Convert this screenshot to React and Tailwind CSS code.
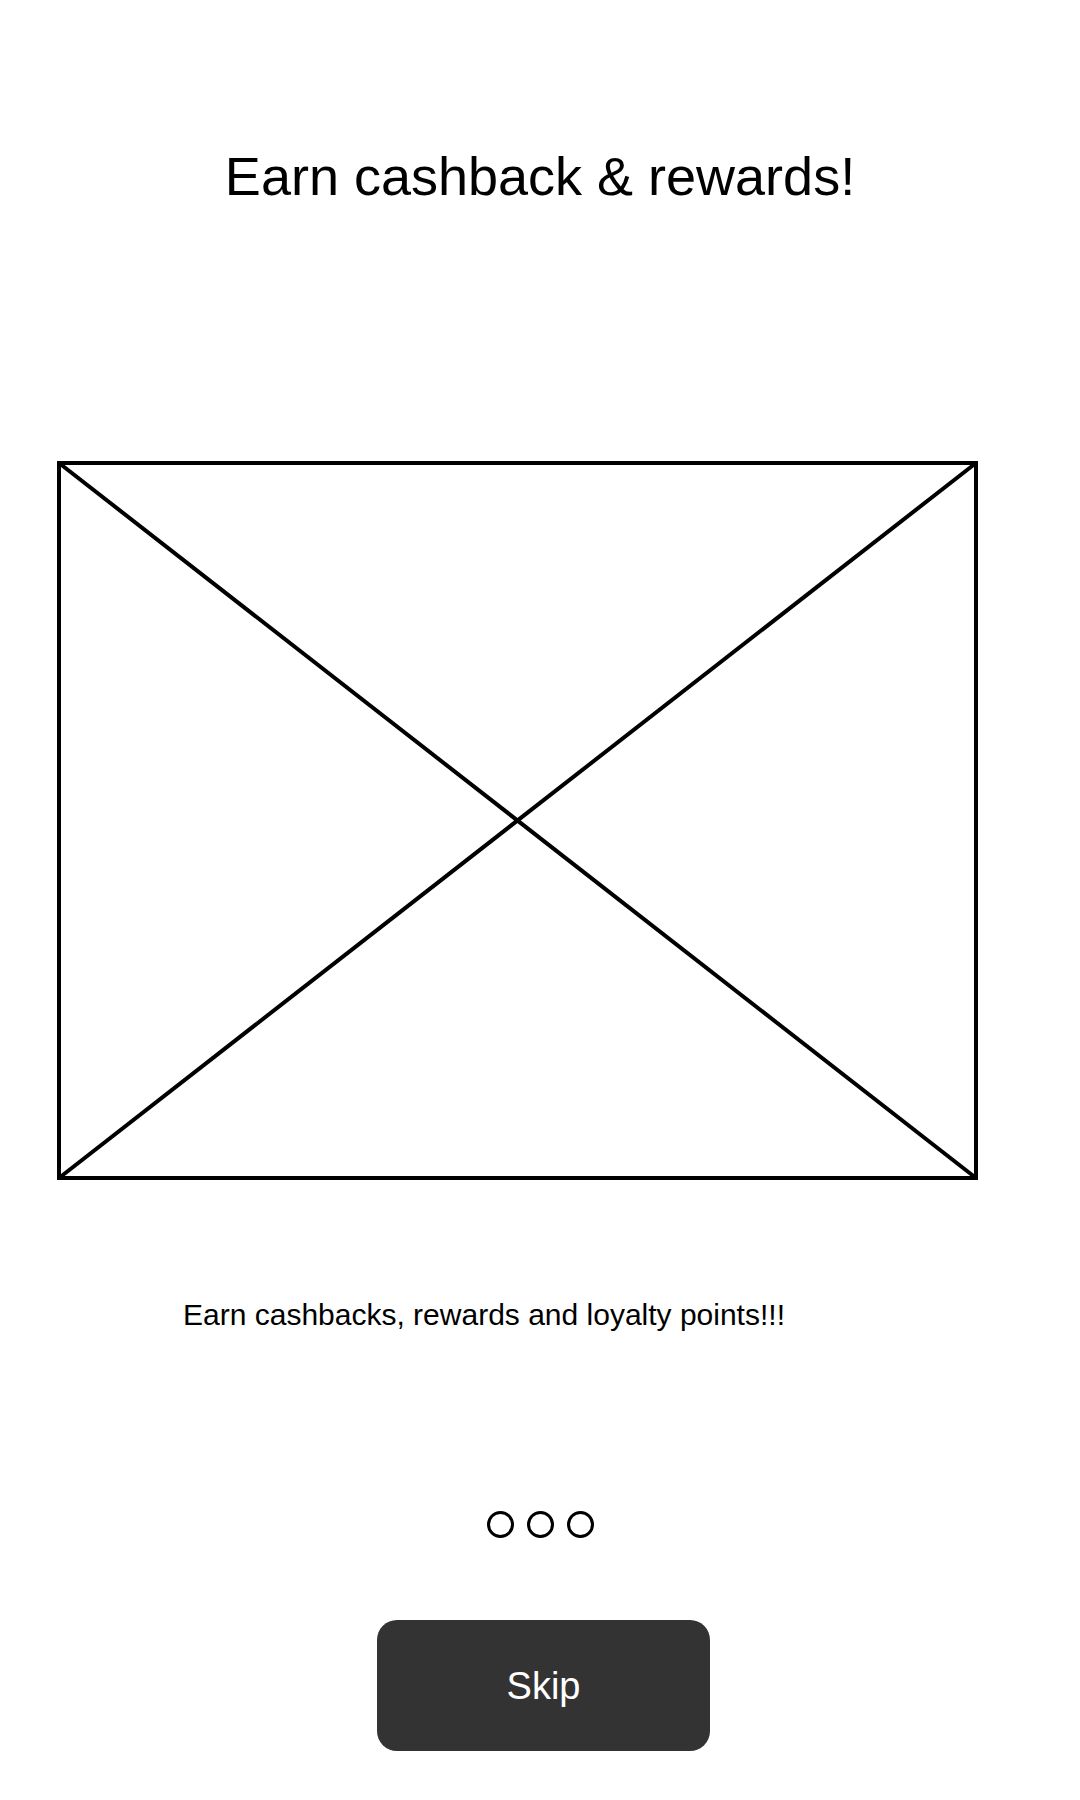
import React from "react";

const Placeholder = () => {
  return (
    <svg width="921" height="719" viewBox="0 0 921 719" className="block">
      <rect x="2" y="2" width="917" height="715" fill="none" stroke="#000" strokeWidth="4" />
      <line x1="2" y1="2" x2="919" y2="717" stroke="#000" strokeWidth="4" />
      <line x1="919" y1="2" x2="2" y2="717" stroke="#000" strokeWidth="4" />
    </svg>
  );
};

const App = () => {
  return (
    <div
      className="w-[1080px] h-[1800px] bg-white flex flex-col text-black"
      style={{ fontFamily: '"Liberation Sans", Arial, sans-serif' }}
    >
      <h1 className="pt-[149px] text-center text-[54px] leading-none font-normal">
        Earn cashback &amp; rewards!
      </h1>

      <div className="mt-[258px] ml-[57px]">
        <Placeholder />
      </div>

      <p className="mt-[120px] ml-[183px] text-[30px] leading-none">
        Earn cashbacks, rewards and loyalty points!!!
      </p>

      <div className="mt-[181px] flex justify-center gap-[13px]">
        <span className="w-[27px] h-[27px] rounded-full border-[3px] border-black"></span>
        <span className="w-[27px] h-[27px] rounded-full border-[3px] border-black"></span>
        <span className="w-[27px] h-[27px] rounded-full border-[3px] border-black"></span>
      </div>

      <button className="mt-[82px] ml-[377px] w-[333px] h-[131px] rounded-[20px] bg-[#333333] text-white text-[38px] leading-none flex items-center justify-center">
        Skip
      </button>
    </div>
  );
};

export default App;
